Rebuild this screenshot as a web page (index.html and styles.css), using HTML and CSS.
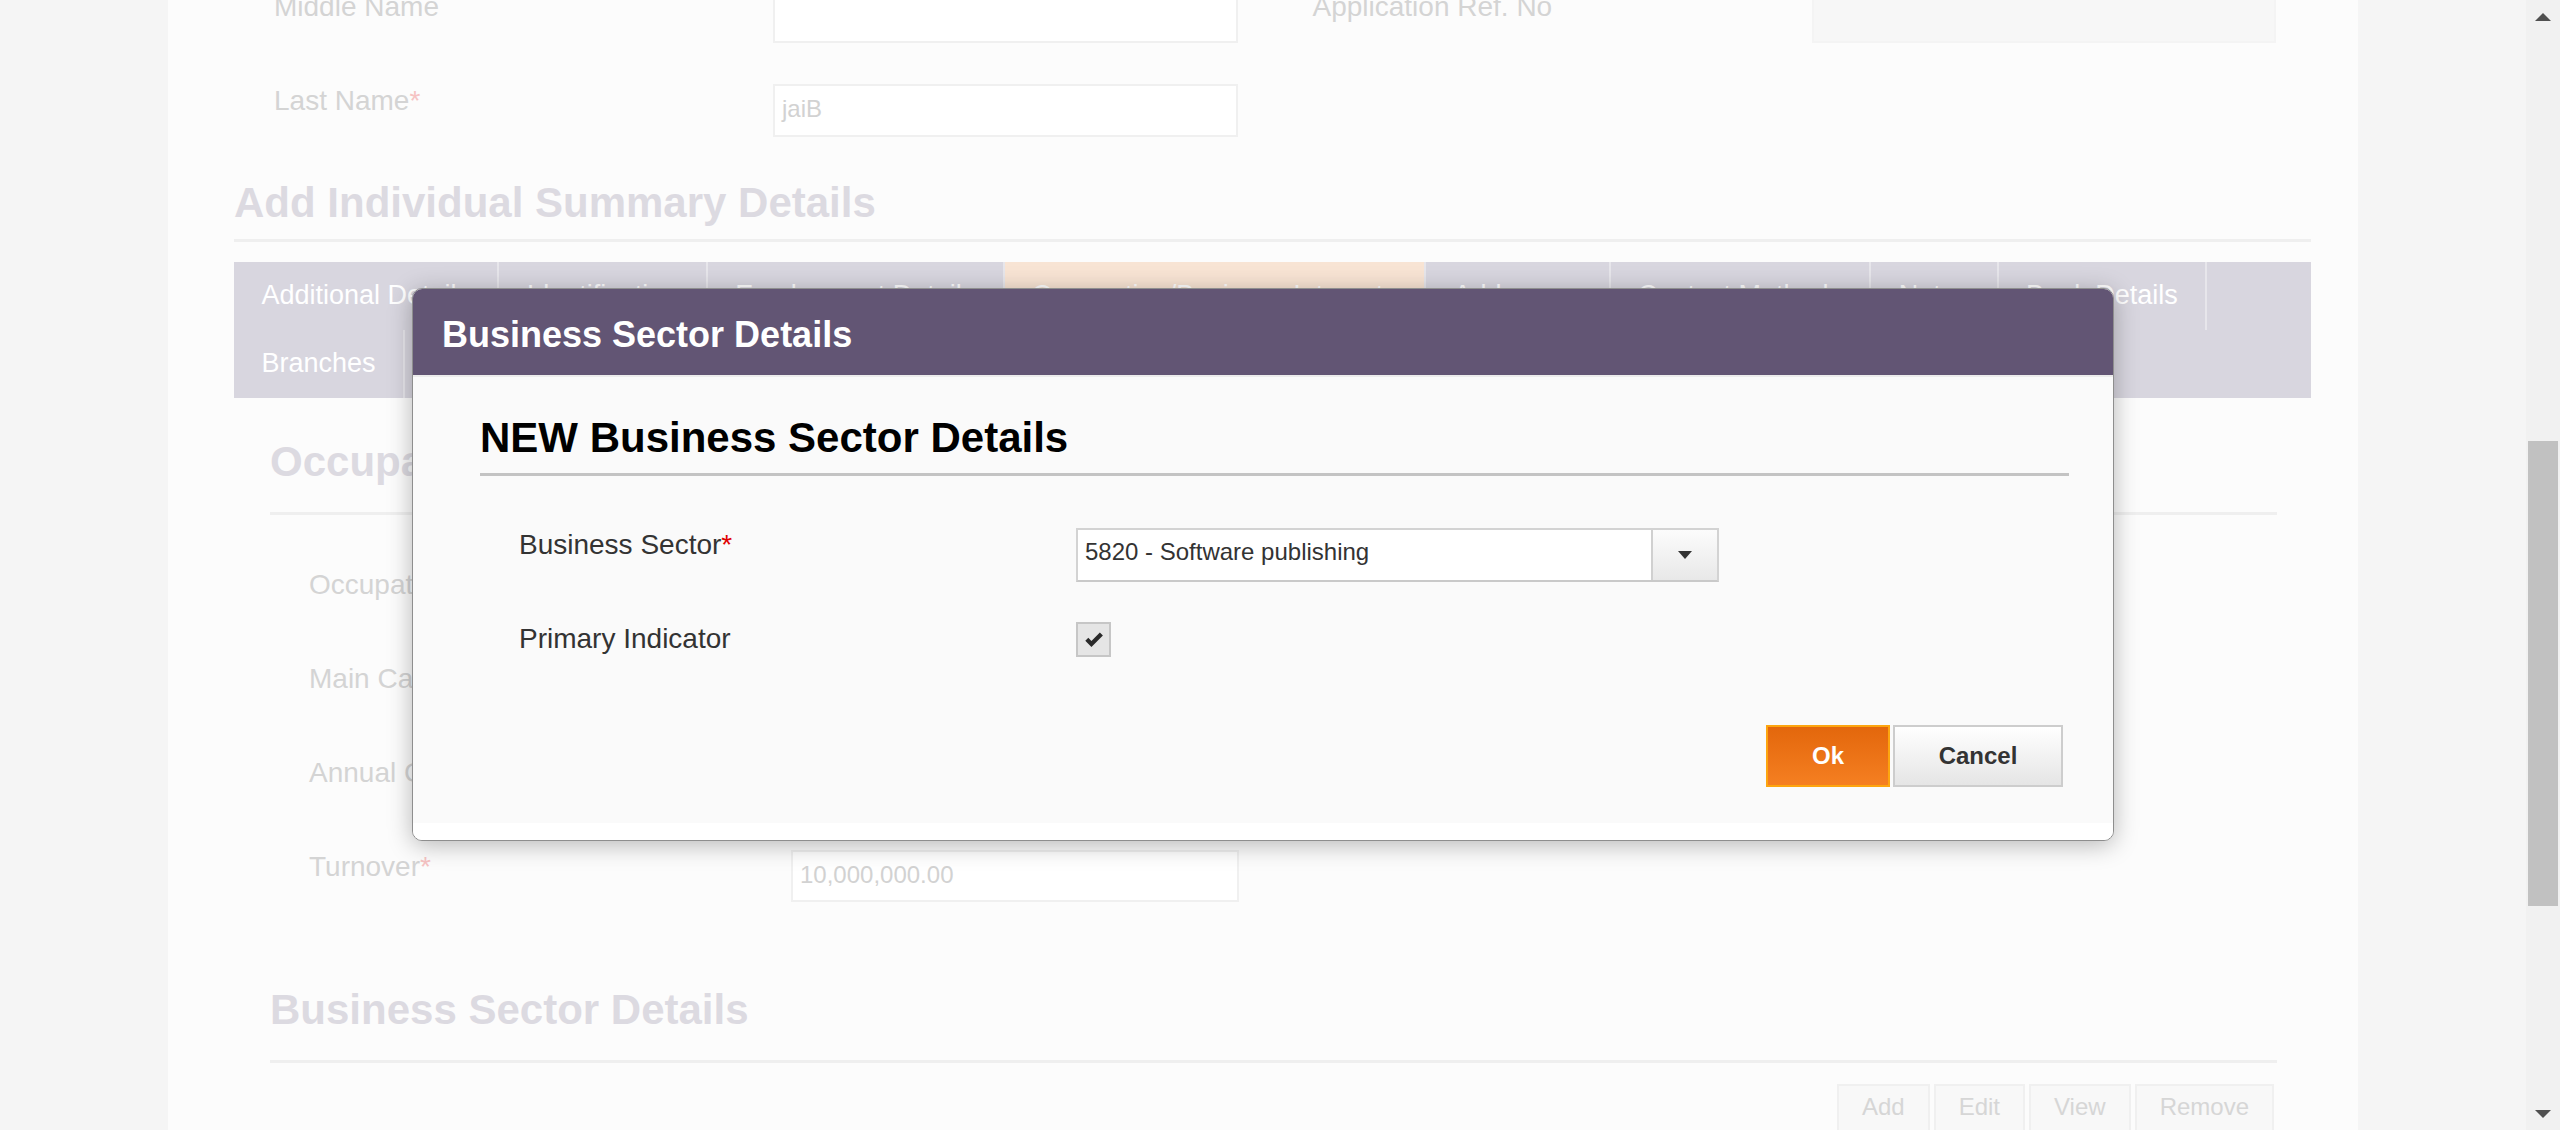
FILE: index.html
```html
<!DOCTYPE html>
<html lang="en">
<head>
<meta charset="utf-8">
<title>Business Sector Details</title>
<link rel="stylesheet" href="styles.css">
</head>
<body>
<div class="viewport">
  <div class="page">
    <div class="card">
      <div class="top-form">
        <div class="field">
          <label class="field-label">Middle Name</label>
          <div class="input"></div>
        </div>
        <div class="field">
          <label class="field-label">Application Ref. No</label>
          <div class="input disabled"></div>
        </div>
        <div class="field">
          <label class="field-label">Last Name<span class="req">*</span></label>
          <div class="input">jaiB</div>
        </div>
        <div class="field"></div>
      </div>

      <h2 class="page-heading">Add Individual Summary Details</h2>

      <ul class="tabs">
        <li class="tab">Additional Details</li>
        <li class="tab">Identification</li>
        <li class="tab">Employment Details</li>
        <li class="tab active">Occupation/Business Interests</li>
        <li class="tab">Addresses</li>
        <li class="tab">Contact Methods</li>
        <li class="tab">Notes</li>
        <li class="tab">Bank Details</li>
        <li class="tab">Branches</li>
        <li class="tab">Relationships</li>
      </ul>

      <div class="tab-content">
        <h3 class="section-heading">Occupation Details</h3>
        <div class="occ-fields">
          <div class="occ-row">
            <label class="field-label">Occupation</label>
            <div class="input"></div>
          </div>
          <div class="occ-row">
            <label class="field-label">Main Category</label>
            <div class="input"></div>
          </div>
          <div class="occ-row">
            <label class="field-label">Annual Capital</label>
            <div class="input"></div>
          </div>
          <div class="occ-row">
            <label class="field-label">Turnover<span class="req">*</span></label>
            <div class="input">10,000,000.00</div>
          </div>
        </div>

        <h3 class="section-heading sectors">Business Sector Details</h3>
        <div class="table-actions">
          <button class="action-btn">Add</button>
          <button class="action-btn">Edit</button>
          <button class="action-btn">View</button>
          <button class="action-btn">Remove</button>
        </div>
      </div>
    </div>
  </div>

  <div class="scrollbar">
    <div class="sb-arrow up"></div>
    <div class="sb-track"><div class="sb-thumb"></div></div>
    <div class="sb-arrow down"></div>
  </div>
</div>

<div class="modal">
  <div class="modal-header">
    <h1 class="modal-title">Business Sector Details</h1>
  </div>
  <div class="modal-body">
    <h2 class="modal-heading">NEW Business Sector Details</h2>
    <div class="modal-form">
      <div class="form-row">
        <label class="modal-label">Business Sector<span class="req-strong">*</span></label>
        <div class="select">
          <div class="select-value">5820 - Software publishing</div>
          <div class="select-btn"><span class="caret"></span></div>
        </div>
      </div>
      <div class="form-row">
        <label class="modal-label">Primary Indicator</label>
        <div class="checkbox">
          <svg width="22" height="22" viewBox="0 0 24 24"><path d="M2.5 12.8 L5.8 9.6 L9.2 13 L18.4 3.8 L21.7 7 L9.2 19.6 Z" fill="#2a2a2a"/></svg>
        </div>
      </div>
    </div>
    <div class="modal-actions">
      <button class="btn btn-ok">Ok</button>
      <button class="btn btn-cancel">Cancel</button>
    </div>
  </div>
  <div class="modal-footer"></div>
</div>
</body>
</html>
```

FILE: styles.css
```css
* { box-sizing: border-box; }

html, body {
  margin: 0;
  padding: 0;
}

body {
  position: relative;
  width: 2560px;
  height: 1130px;
  overflow: hidden;
  font-family: "Liberation Sans", Arial, sans-serif;
}

.viewport {
  display: flex;
  height: 1130px;
}

.page {
  flex: 1;
  background: #f5f5f5;
  overflow: hidden;
}

.card {
  width: 2190px;
  height: 100%;
  margin: 0 auto;
  padding: 0 47px 0 66px;
  background: #fcfcfc;
  overflow: hidden;
}

/* top form (scrolled partly out of view) */
.top-form {
  display: grid;
  grid-template-columns: 1fr 1fr;
  row-gap: 41px;
  margin-top: -10px;
}

.field {
  display: grid;
  grid-template-columns: 499px 1fr;
  align-items: start;
  padding: 0 35px 0 40px;
}

.field-label {
  font-size: 28px;
  line-height: 33px;
  color: #d4d4d4;
}

.req { color: #f6c3c3; }

.input {
  height: 53px;
  padding: 9px 7px 7px;
  border: 2px solid #f0f0f0;
  background: #fff;
  font-size: 24px;
  line-height: 28px;
  color: #d2d2d2;
}

.input.disabled {
  background: #f7f7f7;
  border-color: #f4f4f4;
}

.page-heading {
  margin: 42px 0 0;
  padding-bottom: 12px;
  border-bottom: 3px solid #efefef;
  font-size: 42px;
  line-height: 48px;
  font-weight: bold;
  color: #dcdae1;
}

/* tabs */
.tabs {
  display: flex;
  flex-wrap: wrap;
  margin: 20px 0 0;
  padding: 0;
  list-style: none;
  background: #d8d6df;
}

.tab {
  height: 68px;
  padding: 0 27.4px 2px;
  border-right: 2px solid #e7e6eb;
  font-size: 27px;
  line-height: 66px;
  color: #fff;
  white-space: nowrap;
}

.tab.active { background: #f8e4d4; }

.tab-content {
  padding: 0 34px 0 36px;
}

.section-heading {
  margin: 40px 0 0;
  padding-bottom: 26px;
  border-bottom: 3px solid #efefef;
  font-size: 42px;
  line-height: 48px;
  font-weight: bold;
  color: #dcdae1;
}

.section-heading.sectors { margin-top: 84px; }

.occ-fields {
  display: grid;
  row-gap: 42px;
  margin-top: 53px;
}

.occ-row {
  display: grid;
  grid-template-columns: 482px 448px;
  align-items: start;
  padding-left: 39px;
}

.occ-row .input { height: 52px; }

.table-actions {
  display: flex;
  justify-content: flex-end;
  gap: 4px;
  margin: 21px 3px 0 0;
}

.action-btn {
  padding: 7px 23px 9px;
  border: 2px solid #f0f0f0;
  border-bottom-color: #eaeaea;
  background: #f8f8f8;
  font-family: "Liberation Sans", Arial, sans-serif;
  font-size: 24px;
  line-height: 28px;
  color: #d6d6d6;
}

/* scrollbar */
.scrollbar {
  display: flex;
  flex-direction: column;
  width: 34px;
  background: #f1f1f1;
}

.sb-arrow {
  display: flex;
  align-items: center;
  justify-content: center;
  height: 34px;
}

.sb-arrow.up::before {
  content: "";
  border-left: 8px solid transparent;
  border-right: 8px solid transparent;
  border-bottom: 8px solid #505050;
  margin-top: -1px;
}

.sb-arrow.down::before {
  content: "";
  border-left: 8px solid transparent;
  border-right: 8px solid transparent;
  border-top: 8px solid #505050;
  margin-top: 1px;
}

.sb-track {
  flex: 1;
  padding: 0 2px;
}

.sb-thumb {
  height: 465px;
  margin-top: 407px;
  background: #c1c1c1;
}

/* modal */
.modal {
  position: absolute;
  left: 412px;
  top: 288px;
  width: 1702px;
  border: 1px solid #8e8e8e;
  border-radius: 10px;
  overflow: hidden;
  background: #fff;
  box-shadow: 0 4px 24px rgba(0, 0, 0, 0.28);
}

.modal-header {
  display: flex;
  align-items: center;
  height: 86px;
  padding: 5px 29px 0;
  background: #625574;
}

.modal-title {
  margin: 0;
  font-size: 36px;
  font-weight: bold;
  color: #fff;
}

.modal-body {
  padding: 37px 44px 36px 67px;
  border-top: 2px solid #ececec;
  background: #fafafa;
}

.modal-heading {
  margin: 0;
  padding-bottom: 11px;
  border-bottom: 3px solid #c3c3c3;
  font-size: 42px;
  line-height: 48px;
  font-weight: bold;
  color: #000;
}

.modal-form {
  display: grid;
  row-gap: 40px;
  margin-top: 52px;
  padding-left: 39px;
}

.form-row {
  display: grid;
  grid-template-columns: 557px 643px;
  align-items: start;
}

.modal-label {
  font-size: 28px;
  line-height: 33px;
  color: #333;
}

.req-strong { color: #e00000; }

.select {
  display: flex;
  height: 54px;
  border: 2px solid #d3d3d3;
  border-bottom-color: #c9c9c9;
  background: #fff;
}

.select-value {
  flex: 1;
  padding: 8px 7px;
  font-size: 24px;
  line-height: 28px;
  color: #333;
}

.select-btn {
  display: flex;
  align-items: center;
  justify-content: center;
  width: 66px;
  border-left: 2px solid #d0d0d0;
  background: linear-gradient(#fcfcfc, #e8e8e8);
}

.caret {
  border-left: 7px solid transparent;
  border-right: 7px solid transparent;
  border-top: 8px solid #333;
}

.checkbox {
  display: flex;
  align-items: center;
  justify-content: center;
  width: 35px;
  height: 35px;
  border: 2px solid #c6c6c6;
  background: #e5e5e5;
}

.modal-actions {
  display: flex;
  justify-content: flex-end;
  gap: 3px;
  margin-top: 68px;
  padding-right: 6px;
}

.btn {
  height: 62px;
  font-family: "Liberation Sans", Arial, sans-serif;
  font-size: 24px;
  font-weight: bold;
  cursor: pointer;
}

.btn-ok {
  width: 124px;
  border: 2px solid #fda50f;
  background: linear-gradient(#e3670c, #f57f21);
  color: #fff;
}

.btn-cancel {
  width: 170px;
  border: 2px solid #cdcdcd;
  background: linear-gradient(#ffffff, #e5e5e5);
  color: #333;
}

.modal-footer {
  height: 17px;
  background: #fff;
}
```
